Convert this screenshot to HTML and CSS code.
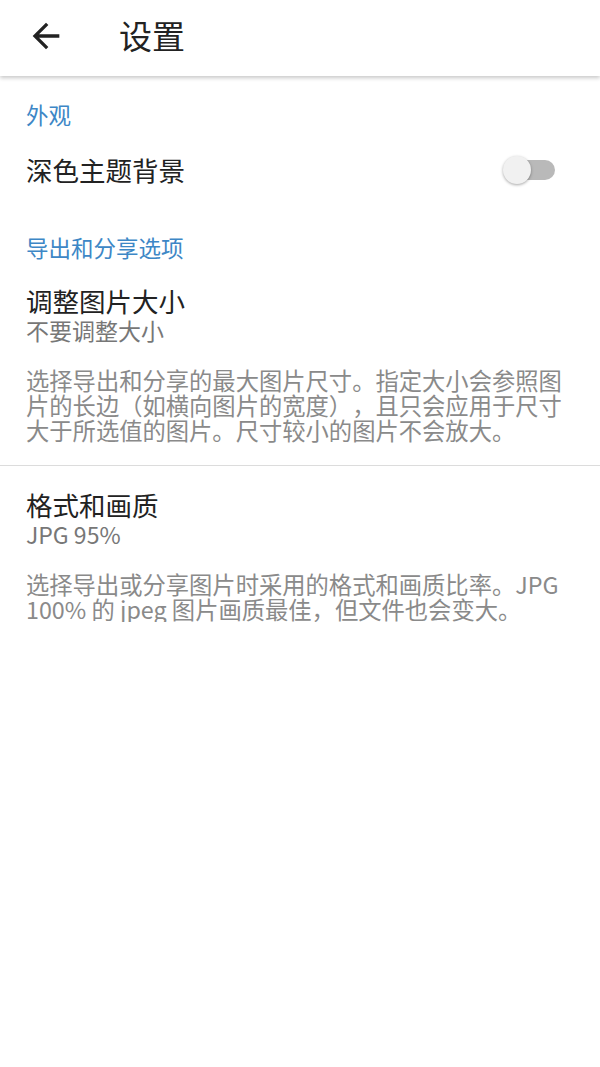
FILE: index.html
```html
<!DOCTYPE html>
<html lang="zh-CN">
<head>
<meta charset="utf-8">
<title>设置</title>
<link rel="stylesheet" href="styles.css">
</head>
<body>
<header class="appbar">
  <svg class="back" viewBox="0 0 24 24" width="40" height="40"><path d="M20 11H7.83l5.59-5.59L12 4l-8 8 8 8 1.41-1.41L7.83 13H20v-2z" fill="#222"/></svg>
  <h1 class="title">设置</h1>
</header>
<main class="content">
  <div class="section-title first">外观</div>
  <div class="row switch-row">
    <div class="row-title">深色主题背景</div>
    <div class="switch"><span class="track"></span><span class="thumb"></span></div>
  </div>
  <div class="section-title second">导出和分享选项</div>
  <div class="pref">
    <div class="row-title">调整图片大小</div>
    <div class="summary">不要调整大小</div>
    <p class="desc">选择导出和分享的最大图片尺寸。指定大小会参照图片的长边（如横向图片的宽度），且只会应用于尺寸大于所选值的图片。尺寸较小的图片不会放大。</p>
  </div>
  <hr class="divider">
  <div class="pref">
    <div class="row-title">格式和画质</div>
    <div class="summary">JPG 95%</div>
    <p class="desc">选择导出或分享图片时采用的格式和画质比率。JPG 100% 的 jpeg 图片画质最佳，但文件也会变大。</p>
  </div>
</main>
</body>
</html>
```
FILE: styles.css
```css
html, body {
  margin: 0;
  padding: 0;
  background: #ffffff;
  font-family: "Noto Sans CJK SC", "Noto Sans", sans-serif;
  text-spacing-trim: space-all;
}
.appbar {
  height: 76px;
  display: flex;
  align-items: center;
  background: #ffffff;
  box-shadow: 0 2px 4px rgba(0,0,0,0.22);
  position: relative;
  z-index: 1;
}
.back {
  margin-left: 26px;
  margin-top: -4px;
  flex: none;
}
.title {
  margin: -6px 0 0 53px;
  font-size: 33px;
  font-weight: 400;
  color: #222;
  line-height: 40px;
}
.content {
  padding: 0 0 0 26px;
}
.section-title {
  font-size: 22.5px;
  line-height: 30px;
  color: #3d87c6;
}
.section-title.first { padding-top: 23px; }
.section-title.second { margin-top: 32px; }
.row-title {
  font-size: 26.5px;
  line-height: 32px;
  color: #222;
}
.switch-row {
  margin-top: 11px;
  height: 60px;
  display: flex;
  align-items: center;
  justify-content: space-between;
  padding-right: 45px;
}
.switch {
  position: relative;
  width: 52px;
  height: 30px;
}
.track {
  position: absolute;
  left: 2px;
  right: 0;
  top: 5px;
  height: 20px;
  border-radius: 10px;
  background: #b9b9b9;
}
.thumb {
  position: absolute;
  left: 0;
  top: 1px;
  width: 28px;
  height: 28px;
  border-radius: 50%;
  background: #f1f1f1;
  box-shadow: 0 1px 3px rgba(0,0,0,0.35);
}
.section-title.second + .pref { padding-top: 23px; }
.summary {
  font-size: 23px;
  line-height: 26px;
  color: #777;
}
.desc {
  margin: 25px 26px 0 0;
  font-size: 23.3px;
  line-height: 25px;
  color: #8a8a8a;
}
.divider {
  border: none;
  border-top: 1.5px solid #dcdcdc;
  margin: 22px 0 23px -26px;
  height: 0;
}
```
